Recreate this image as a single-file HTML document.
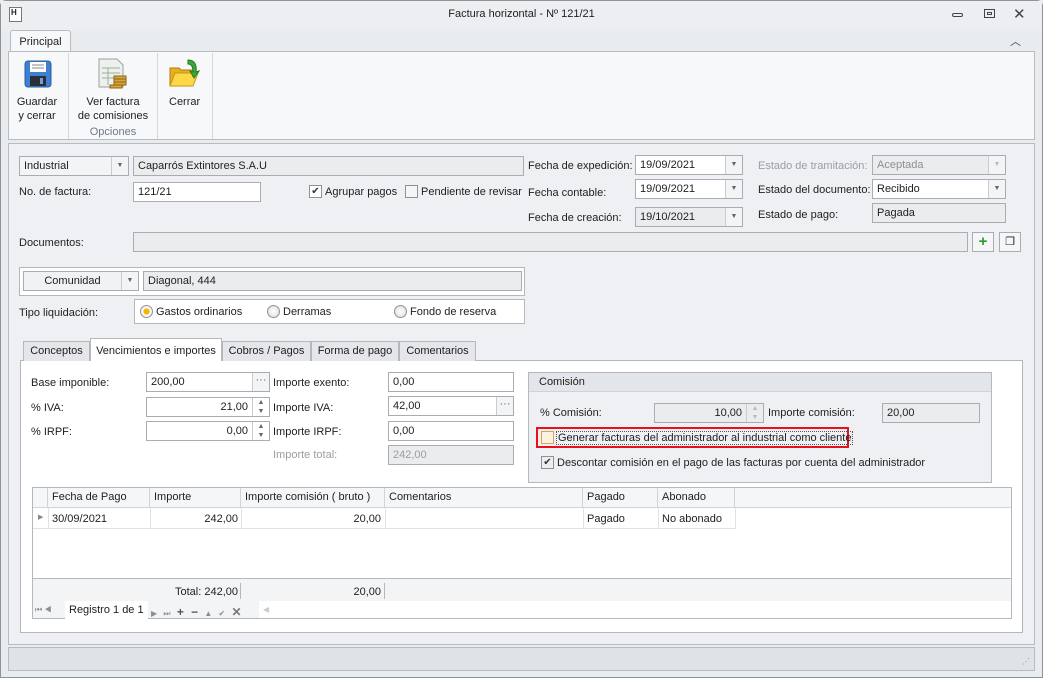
<!DOCTYPE html>
<html><head><meta charset="utf-8"><style>
*{box-sizing:border-box;margin:0;padding:0}
body{width:1043px;height:678px;overflow:hidden;background:#e9ecef;font-family:"Liberation Sans",sans-serif;font-size:11px;color:#1e1e1e;position:relative}
.a{position:absolute;white-space:nowrap}
.f{position:absolute;border:1px solid #a9adb3;background:#fff;height:20px;line-height:18px;padding-left:4px;white-space:nowrap;overflow:hidden}
.g{background:#ebecee}
.r{text-align:right;padding-right:4px}
.btn{position:absolute;right:0;top:0;bottom:0;width:17px;border-left:1px solid #c9ccd0;background:#f3f4f5;text-align:center;color:#666;font-size:7px;line-height:18px}
.lbl{position:absolute;white-space:nowrap;line-height:14px}
.dis{color:#9a9da2}
.cb{position:absolute;width:13px;height:13px;border:1px solid #8e9296;background:#fff;font-size:10px;line-height:11px;text-align:center;color:#333}
.rd{position:absolute;width:13px;height:13px;border:1px solid #8e9296;border-radius:50%;background:radial-gradient(#fff,#d8dadc)}
.tab{position:absolute;top:341px;height:20px;border:1px solid #b4b8bd;border-bottom:none;background:#e4e6e9;text-align:center;line-height:19px}
.th{position:absolute;top:488px;height:20px;line-height:18px;border-right:1px solid #d0d3d7;padding-left:4px}
</style></head><body>
<div class="a" style="left:0;top:0;width:1043px;height:678px;border:1px solid #8d9399;border-radius:6px 6px 0 0"></div>
<div class="a" style="left:1px;top:1px;width:1041px;height:30px;background:#eceef1"></div>
<div class="a" style="left:9px;top:7px;width:13px;height:15px;border:1px solid #777;background:#fff;font-size:8px;font-weight:bold;line-height:10px;padding-left:1px">H</div>
<div class="a" style="left:0;width:1043px;top:8px;text-align:center">Factura horizontal - Nº 121/21</div>
<div class="a" style="left:952px;top:13px;width:11px;height:4px;border:1px solid #444;border-radius:2px"></div>
<div class="a" style="left:984px;top:9px;width:11px;height:9px;border:1px solid #444"><div style="margin:2px;height:3px;border:1px solid #444"></div></div>
<div class="a" style="left:1013px;top:5px;font-size:15px;color:#444">✕</div>
<div class="a" style="left:1010px;top:33px;font-size:11px;color:#444">︿</div>
<div class="a" style="left:10px;top:30px;width:61px;height:24px;border:1px solid #b7bcc1;border-bottom:none;background:#f7f8f9;border-radius:3px 3px 0 0;text-align:center;line-height:22px">Principal</div>
<div class="a" style="left:8px;top:51px;width:1027px;height:89px;border:1px solid #b7bcc1;background:#f7f8f9"></div>
<div class="a" style="left:9px;top:52px;width:1025px;height:1px;background:#f7f8f9"></div>
<div class="a" style="left:68px;top:53px;width:1px;height:86px;background:#d6d9dc"></div>
<div class="a" style="left:157px;top:53px;width:1px;height:86px;background:#d6d9dc"></div>
<div class="a" style="left:212px;top:53px;width:1px;height:86px;background:#d6d9dc"></div>
<svg class="a" style="left:24px;top:60px" width="28" height="28" viewBox="0 0 28 28"><rect x="1" y="1" width="26" height="26" rx="3" fill="#3d7fd1" stroke="#2b5e9d"/><rect x="6" y="2" width="16" height="10" fill="#fff"/><line x1="8" y1="5" x2="20" y2="5" stroke="#888"/><line x1="8" y1="8" x2="20" y2="8" stroke="#888"/><rect x="6" y="16" width="16" height="10" fill="#2b2f36"/><rect x="16" y="18" width="3" height="6" fill="#6ea0e0"/></svg>
<svg class="a" style="left:98px;top:58px" width="30" height="32" viewBox="0 0 30 32"><path d="M1 1h18l6 6v22H1z" fill="#eef0ee" stroke="#9aa19a"/><g stroke="#9ab09a"><line x1="4" y1="10" x2="22" y2="10"/><line x1="4" y1="15" x2="22" y2="15"/><line x1="4" y1="20" x2="22" y2="20"/><line x1="10" y1="10" x2="10" y2="27"/></g><g fill="#d9a53a" stroke="#8a6514"><rect x="16" y="18" width="12" height="3"/><rect x="16" y="21" width="12" height="3"/><rect x="16" y="24" width="12" height="3"/><rect x="12" y="27" width="12" height="3"/></g></svg>
<svg class="a" style="left:168px;top:58px" width="32" height="32" viewBox="0 0 32 32"><path d="M2 10h9l2 2h12v16H2z" fill="#e8b020" stroke="#b07d10"/><path d="M2 28l5-13h23l-5 13z" fill="#ffd84a" stroke="#c99514"/><path d="M20 2c6 0 9 4 8 12l3-1-5 7-4-7 3 1c0-6-2-8-5-8z" fill="#3ca83a" stroke="#217a20"/></svg>
<div class="lbl" style="left:12px;top:95px;text-align:center;width:50px">Guardar<br>y cerrar</div>
<div class="lbl" style="left:73px;top:95px;text-align:center;width:80px">Ver factura<br>de comisiones</div>
<div class="lbl" style="left:73px;top:125px;width:80px;text-align:center;color:#6c7a8a">Opciones</div>
<div class="lbl" style="left:169px;top:95px">Cerrar</div>
<div class="a" style="left:8px;top:143px;width:1027px;height:502px;border:1px solid #b7bcc1;background:#eef0f3"></div>
<div class="f" style="left:19px;top:156px;width:110px;background:#f3f4f6">Industrial<div class="btn">▼</div></div>
<div class="f g" style="left:133px;top:156px;width:391px">Caparrós Extintores S.A.U</div>
<div class="lbl" style="left:528px;top:159px">Fecha de expedición:</div>
<div class="f" style="left:635px;top:155px;width:108px">19/09/2021<div class="btn">▼</div></div>
<div class="lbl dis" style="left:758px;top:159px">Estado de tramitación:</div>
<div class="f g dis" style="left:872px;top:155px;width:134px;color:#8c9095">Aceptada<div class="btn" style="color:#bbb">▼</div></div>
<div class="lbl" style="left:19px;top:185px">No. de factura:</div>
<div class="f" style="left:133px;top:182px;width:128px">121/21</div>
<div class="cb" style="left:309px;top:185px">✔</div><div class="lbl" style="left:325px;top:185px">Agrupar pagos</div>
<div class="cb" style="left:405px;top:185px;background:#f5f5f5"></div><div class="lbl" style="left:421px;top:185px">Pendiente de revisar</div>
<div class="lbl" style="left:528px;top:186px">Fecha contable:</div>
<div class="f" style="left:635px;top:179px;width:108px">19/09/2021<div class="btn">▼</div></div>
<div class="lbl" style="left:758px;top:183px">Estado del documento:</div>
<div class="f" style="left:872px;top:179px;width:134px">Recibido<div class="btn">▼</div></div>
<div class="lbl" style="left:528px;top:211px">Fecha de creación:</div>
<div class="f g" style="left:635px;top:207px;width:108px">19/10/2021<div class="btn">▼</div></div>
<div class="lbl" style="left:758px;top:208px">Estado de pago:</div>
<div class="f g" style="left:872px;top:203px;width:134px">Pagada</div>
<div class="lbl" style="left:19px;top:236px">Documentos:</div>
<div class="f g" style="left:133px;top:232px;width:835px"></div>
<div class="a" style="left:972px;top:232px;width:22px;height:20px;border:1px solid #a9adb3;background:#f5f6f7;color:#2b9a2b;font-weight:bold;font-size:15px;text-align:center;line-height:18px">+</div>
<div class="a" style="left:999px;top:232px;width:22px;height:20px;border:1px solid #a9adb3;background:#f5f6f7;text-align:center;line-height:18px">❐</div>
<div class="a" style="left:19px;top:267px;width:506px;height:29px;border:1px solid #b4b8bd;background:#fff"></div>
<div class="f" style="left:23px;top:271px;width:116px;background:#f0f2f4;text-align:center;padding:0 17px 0 0">Comunidad<div class="btn">▼</div></div>
<div class="f g" style="left:143px;top:271px;width:379px">Diagonal, 444</div>
<div class="lbl" style="left:19px;top:306px">Tipo liquidación:</div>
<div class="a" style="left:134px;top:299px;width:391px;height:25px;border:1px solid #b4b8bd;background:#fff"></div>
<div class="rd" style="left:140px;top:305px;background:radial-gradient(#f5b400 35%,#fff 45%,#ddd)"></div><div class="lbl" style="left:156px;top:305px">Gastos ordinarios</div>
<div class="rd" style="left:267px;top:305px"></div><div class="lbl" style="left:283px;top:305px">Derramas</div>
<div class="rd" style="left:394px;top:305px"></div><div class="lbl" style="left:410px;top:305px">Fondo de reserva</div>
<div class="a" style="left:20px;top:360px;width:1003px;height:273px;border:1px solid #b4b8bd;background:#fff"></div>
<div class="tab" style="left:23px;width:67px">Conceptos</div>
<div class="tab" style="left:90px;width:132px;top:338px;height:23px;background:#fff;line-height:24px">Vencimientos e importes</div>
<div class="tab" style="left:222px;width:89px">Cobros / Pagos</div>
<div class="tab" style="left:311px;width:88px">Forma de pago</div>
<div class="tab" style="left:399px;width:77px">Comentarios</div>
<div class="lbl" style="left:31px;top:376px">Base imponible:</div>
<div class="f" style="left:146px;top:372px;width:124px">200,00<div class="btn" style="font-size:11px;line-height:14px">···</div></div>
<div class="lbl" style="left:273px;top:376px">Importe exento:</div>
<div class="f" style="left:388px;top:372px;width:126px">0,00</div>
<div class="lbl" style="left:31px;top:401px">% IVA:</div>
<div class="f r" style="left:146px;top:397px;width:124px;padding-right:21px">21,00<div class="btn" style="font-size:7px;line-height:9px;background:#fff">▲<br>▼</div></div>
<div class="lbl" style="left:273px;top:401px">Importe IVA:</div>
<div class="f" style="left:388px;top:396px;width:126px">42,00<div class="btn" style="font-size:11px;line-height:14px">···</div></div>
<div class="lbl" style="left:31px;top:425px">% IRPF:</div>
<div class="f r" style="left:146px;top:421px;width:124px;padding-right:21px">0,00<div class="btn" style="font-size:7px;line-height:9px;background:#fff">▲<br>▼</div></div>
<div class="lbl" style="left:273px;top:425px">Importe IRPF:</div>
<div class="f" style="left:388px;top:421px;width:126px">0,00</div>
<div class="lbl dis" style="left:273px;top:448px">Importe total:</div>
<div class="f g dis" style="left:388px;top:445px;width:126px">242,00</div>
<div class="a" style="left:528px;top:372px;width:464px;height:111px;border:1px solid #b4b8bd;background:#eef0f3"></div>
<div class="a" style="left:529px;top:373px;width:462px;height:19px;background:#e2e5e9;border-bottom:1px solid #cfd3d7;padding-left:10px;line-height:18px">Comisión</div>
<div class="lbl" style="left:540px;top:406px">% Comisión:</div>
<div class="f g r" style="left:654px;top:403px;width:110px;padding-right:21px">10,00<div class="btn" style="font-size:7px;line-height:9px;color:#bbb;background:#ebecee">▲<br>▼</div></div>
<div class="lbl" style="left:768px;top:406px">Importe comisión:</div>
<div class="f g" style="left:882px;top:403px;width:98px">20,00</div>
<div class="a" style="left:536px;top:427px;width:313px;height:21px;border:2px solid #e8101a"></div>
<div class="cb" style="left:541px;top:431px;border-color:#e0a050;background:#fdf1df"></div>
<div class="lbl" style="left:556px;top:431px;border:1px dotted #555;padding:0 1px;line-height:12px">Generar facturas del administrador al industrial como cliente</div>
<div class="cb" style="left:541px;top:456px;background:#eee">✔</div>
<div class="lbl" style="left:557px;top:456px">Descontar comisión en el pago de las facturas por cuenta del administrador</div>
<div class="a" style="left:32px;top:487px;width:980px;height:132px;border:1px solid #b4b8bd;background:#fff"></div>
<div class="a" style="left:33px;top:488px;width:978px;height:20px;background:#f5f6f8;border-bottom:1px solid #d0d3d7"></div>
<div class="th" style="left:33px;width:15px"></div>
<div class="th" style="left:48px;width:102px">Fecha de Pago</div>
<div class="th" style="left:150px;width:91px">Importe</div>
<div class="th" style="left:241px;width:144px">Importe comisión ( bruto )</div>
<div class="th" style="left:385px;width:198px">Comentarios</div>
<div class="th" style="left:583px;width:75px">Pagado</div>
<div class="th" style="left:658px;width:77px">Abonado</div>
<div class="a" style="left:33px;top:508px;width:702px;height:21px;border-bottom:1px solid #e0e2e5"></div>
<div class="a" style="left:38px;top:513px;font-size:7px;color:#888">▶</div>
<div class="a" style="left:48px;top:508px;width:1px;height:21px;background:#e0e2e5"></div>
<div class="lbl" style="left:52px;top:512px">30/09/2021</div>
<div class="a" style="left:150px;top:508px;width:1px;height:21px;background:#e0e2e5"></div>
<div class="lbl" style="left:150px;top:512px;width:88px;text-align:right">242,00</div>
<div class="a" style="left:241px;top:508px;width:1px;height:21px;background:#e0e2e5"></div>
<div class="lbl" style="left:241px;top:512px;width:140px;text-align:right">20,00</div>
<div class="a" style="left:385px;top:508px;width:1px;height:21px;background:#e0e2e5"></div>
<div class="a" style="left:583px;top:508px;width:1px;height:21px;background:#e0e2e5"></div>
<div class="lbl" style="left:587px;top:512px">Pagado</div>
<div class="a" style="left:658px;top:508px;width:1px;height:21px;background:#e0e2e5"></div>
<div class="lbl" style="left:662px;top:512px">No abonado</div>
<div class="a" style="left:735px;top:508px;width:1px;height:21px;background:#e0e2e5"></div>
<div class="a" style="left:33px;top:578px;width:978px;height:40px;background:#f3f4f6;border-top:1px solid #b4b8bd"></div>
<div class="lbl" style="left:150px;top:585px;width:88px;text-align:right">Total: 242,00</div>
<div class="a" style="left:240px;top:583px;width:1px;height:16px;background:#b4b8bd"></div>
<div class="lbl" style="left:241px;top:585px;width:140px;text-align:right">20,00</div>
<div class="a" style="left:384px;top:583px;width:1px;height:16px;background:#b4b8bd"></div>
<div class="a" style="left:35px;top:605px;font-size:8px;color:#8a8f95">⏮ ◀</div>
<div class="a" style="left:65px;top:601px;width:83px;height:18px;background:#fff;padding-left:4px;line-height:18px">Registro 1 de 1</div>
<div class="a" style="left:151px;top:605px;font-size:8px;color:#8a8f95;letter-spacing:2px">▶ ⏭ <b style="font-size:12px;color:#555">+ −</b> ▲ ✔ <b style="font-size:12px;color:#777">✕</b></div>
<div class="a" style="left:259px;top:601px;width:752px;height:17px;background:#fff"></div>
<div class="a" style="left:263px;top:605px;font-size:8px;color:#ccc">◀</div>
<div class="a" style="left:8px;top:647px;width:1027px;height:24px;border:1px solid #b7bcc1;background:#dfe2e6"></div>
<div class="a" style="left:1022px;top:657px;font-size:8px;color:#999">⋰</div>
</body></html>
